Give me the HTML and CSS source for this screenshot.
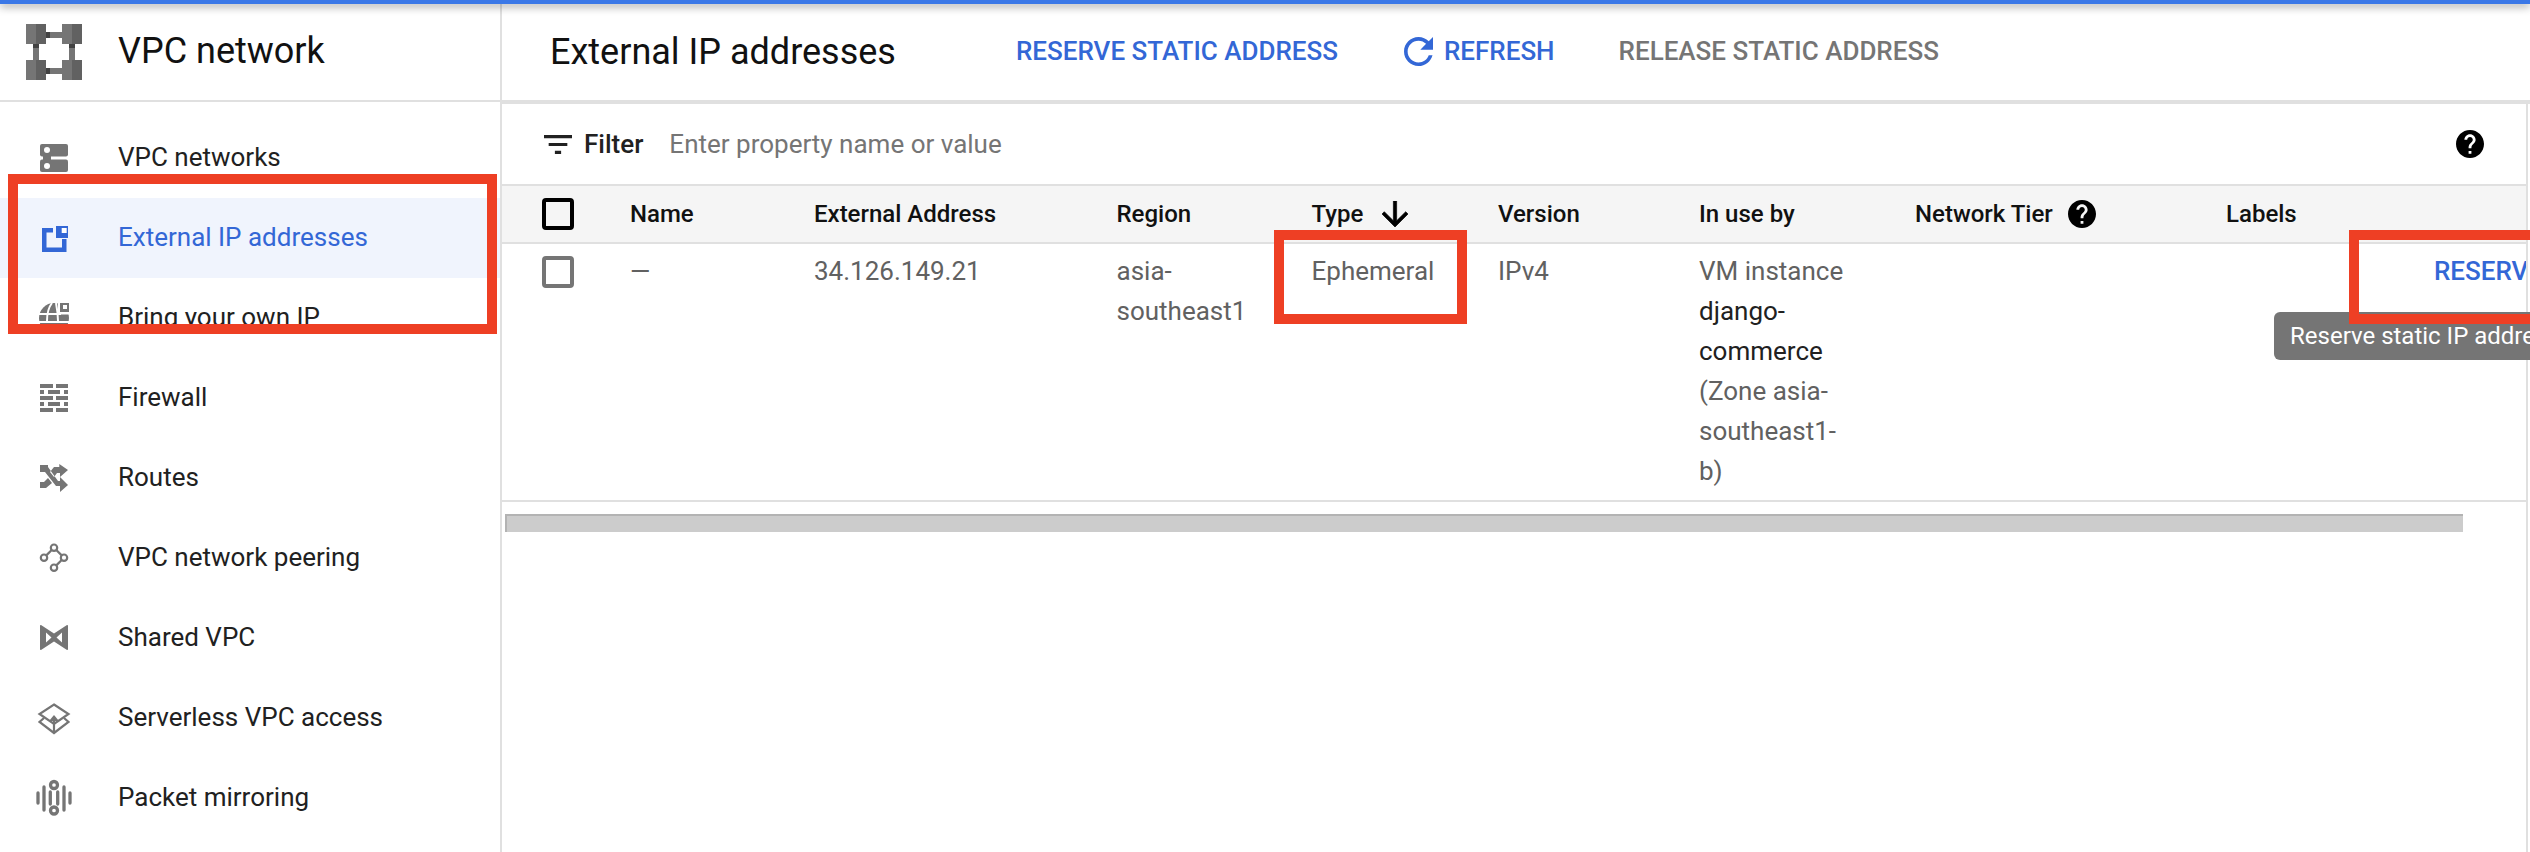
FILE: index.html
```html
<!DOCTYPE html>
<html lang="en">
<head>
<meta charset="utf-8">
<title>External IP addresses</title>
<link rel="stylesheet" href="styles.css">
</head>
<body>
<div class="app">
  <div class="topbar"></div>
  <div class="shell">
    <aside class="sidebar">
      <div class="side-head">
        <svg class="logo" width="56" height="56" viewBox="0 0 56 56">
          <rect x="20" y="8" width="16" height="6" fill="#757575"/>
          <rect x="20" y="8" width="4" height="6" fill="#424242"/>
          <rect x="20" y="44" width="16" height="6" fill="#757575"/>
          <rect x="20" y="44" width="4" height="6" fill="#424242"/>
          <rect x="7" y="20" width="6" height="16" fill="#757575"/>
          <rect x="7" y="20" width="6" height="4" fill="#424242"/>
          <rect x="43" y="20" width="6" height="16" fill="#757575"/>
          <rect x="43" y="20" width="6" height="4" fill="#424242"/>
          <g fill="#757575">
            <rect width="10" height="20"/><rect x="36" width="10" height="20"/>
            <rect y="36" width="10" height="20"/><rect x="36" y="36" width="10" height="20"/>
          </g>
          <g fill="#616161">
            <rect x="10" width="10" height="20"/><rect x="46" width="10" height="20"/>
            <rect x="10" y="36" width="10" height="20"/><rect x="46" y="36" width="10" height="20"/>
          </g>
        </svg>
        <h1 class="side-title">VPC network</h1>
      </div>
      <nav class="nav">
        <a class="nav-item">
          <svg class="nav-icon" viewBox="0 0 36 36"><rect x="4" y="4" width="28" height="12.5" rx="2"/><rect x="4" y="19.5" width="28" height="12.5" rx="2"/><rect x="7" y="14" width="8" height="8"/><circle class="cut" cx="11" cy="10" r="3"/><circle class="cut" cx="11" cy="26" r="3"/></svg>
          <span>VPC networks</span>
        </a>
        <a class="nav-item active">
          <svg class="nav-icon" viewBox="0 0 36 36"><path d="M6 8H17V12.5H10.5V27.5H26V19H30.5V32H6Z"/><rect x="20" y="6" width="12" height="12"/><rect class="cut" x="25.7" y="8" width="5" height="5"/></svg>
          <span>External IP addresses</span>
        </a>
        <a class="nav-item">
          <svg class="nav-icon" viewBox="0 0 36 36"><circle cx="18" cy="18" r="15"/><rect class="cut" x="22" y="0" width="14" height="14.5"/><rect x="24" y="3" width="9" height="9"/><rect class="cut" x="27" y="5" width="4" height="4"/><rect class="cut" x="3" y="13" width="22" height="2"/><rect class="cut" x="3" y="21" width="30" height="2"/><path class="line-cut" d="M16 3C12 8 11 13 11 21M20 3C21 8 22 13 22 21"/></svg>
          <span>Bring your own IP</span>
        </a>
        <a class="nav-item">
          <svg class="nav-icon" viewBox="0 0 36 36"><path d="M4 4h13v4H4zM20 4h12v4H20zM4 10h4v4H4zM12 10h12v4H12zM28 10h4v4h-4zM4 16h13v4H4zM20 16h12v4H20zM4 22h4v4H4zM12 22h12v4H12zM28 22h4v4h-4zM4 28h13v4H4zM20 28h12v4H20z"/></svg>
          <span>Firewall</span>
        </a>
        <a class="nav-item">
          <svg class="nav-icon" viewBox="0 0 36 36"><path d="M4 5V12H9L20 26H24V32L32 25 24 17V21H22L12 7V5ZM18 7H23.300V4L32 10 24 17V13H21L18 17 14 12ZM4 22H8L12 18 16 23 10 28H4Z"/></svg>
          <span>Routes</span>
        </a>
        <a class="nav-item">
          <svg class="nav-icon stroke" viewBox="0 0 36 36"><circle cx="18" cy="7.700" r="3.200"/><circle cx="8" cy="17.700" r="3.200"/><circle cx="28" cy="17.700" r="3.200"/><circle cx="18" cy="27.700" r="3.200"/><path d="M15.700 10 10.300 15.400M20.300 10 25.700 15.400M25.700 20 20.300 25.400"/></svg>
          <span>VPC network peering</span>
        </a>
        <a class="nav-item">
          <svg class="nav-icon" viewBox="0 0 36 36"><path fill-rule="evenodd" d="M5 5 18 13.500 31 5C31.600 5 32 5.400 32 6V29C32 29.600 31.600 30 31 30L18 21.500 5 30C4.400 30 4 29.600 4 29V6C4 5.400 4.400 5 5 5ZM10 12.500V22.500L15.500 17.500ZM26 12.500 20.500 17.500 26 22.500Z"/></svg>
          <span>Shared VPC</span>
        </a>
        <a class="nav-item">
          <svg class="nav-icon stroke" viewBox="0 0 36 36"><path d="M18 4.500 32.500 14 18 24 3.500 14Z"/><path d="M8 18 3.500 22 18 33 32.500 22 28 18"/><path d="M18 32V20"/><path class="solid" d="M18 15 23 21H13Z"/></svg>
          <span>Serverless VPC access</span>
        </a>
        <a class="nav-item">
          <svg class="nav-icon pills" viewBox="0 0 36 36"><circle cx="18" cy="5" r="3.500"/><circle cx="18" cy="30.500" r="3.500"/><path d="M2 13V23M8 7V30M14.300 12V24M21.700 12V24M28 7V30M34 13V23"/></svg>
          <span>Packet mirroring</span>
        </a>
      </nav>
    </aside>
    <main class="main">
      <header class="main-head">
        <h2 class="main-title">External IP addresses</h2>
        <a class="action reserve">RESERVE STATIC ADDRESS</a>
        <a class="action refresh">
          <svg width="29" height="29" viewBox="4 4 16 16"><path d="M17.650 6.350C16.200 4.900 14.210 4 12 4c-4.420 0-7.990 3.580-7.990 8s3.570 8 7.990 8c3.730 0 6.840-2.550 7.730-6h-2.080c-.82 2.330-3.040 4-5.650 4-3.310 0-6-2.690-6-6s2.690-6 6-6c1.660 0 3.140.69 4.220 1.780L13 11h7V4l-2.350 2.350z"/></svg>
          REFRESH
        </a>
        <a class="action release">RELEASE STATIC ADDRESS</a>
      </header>
      <div class="content">
        <div class="filter">
          <svg class="filter-icon" width="28" height="19" viewBox="3 6 18 12" preserveAspectRatio="none"><path d="M10 18h4v-2h-4v2zM3 6v2h18V6H3zm3 7h12v-2H6v2z"/></svg>
          <span class="filter-label">Filter</span>
          <span class="filter-hint">Enter property name or value</span>
          <svg class="help filter-help" width="28" height="28" viewBox="2 2 20 20"><path d="M12 2C6.480 2 2 6.480 2 12s4.480 10 10 10 10-4.480 10-10S17.520 2 12 2zm1 17h-2v-2h2v2zm2.070-7.750l-.9.92C13.450 12.900 13 13.500 13 15h-2v-.5c0-1.100.45-2.100 1.170-2.830l1.240-1.260c.37-.36.59-.86.59-1.410 0-1.100-.9-2-2-2s-2 .9-2 2H8c0-2.210 1.790-4 4-4s4 1.790 4 4c0 .88-.36 1.680-.93 2.250z"/></svg>
        </div>
        <div class="table-row table-head">
          <div><span class="check check-head"></span></div>
          <div>Name</div>
          <div>External Address</div>
          <div>Region</div>
          <div class="with-icon">Type
            <svg class="sort" width="26" height="26" viewBox="4 4 16 16"><path d="M20 12l-1.410-1.410L13 16.170V4h-2v12.170l-5.580-5.590L4 12l8 8 8-8z"/></svg>
          </div>
          <div>Version</div>
          <div>In use by</div>
          <div class="with-icon">Network Tier
            <svg class="help" width="28" height="28" viewBox="2 2 20 20"><path d="M12 2C6.480 2 2 6.480 2 12s4.480 10 10 10 10-4.480 10-10S17.520 2 12 2zm1 17h-2v-2h2v2zm2.070-7.750l-.9.92C13.450 12.900 13 13.500 13 15h-2v-.5c0-1.100.45-2.100 1.170-2.830l1.240-1.260c.37-.36.59-.86.59-1.410 0-1.100-.9-2-2-2s-2 .9-2 2H8c0-2.210 1.790-4 4-4s4 1.790 4 4c0 .88-.36 1.680-.93 2.250z"/></svg>
          </div>
          <div>Labels</div>
          <div></div>
        </div>
        <div class="table-row table-body">
          <div><span class="check"></span></div>
          <div>—</div>
          <div>34.126.149.21</div>
          <div class="cell-region">asia-southeast1</div>
          <div>Ephemeral</div>
          <div>IPv4</div>
          <div class="cell-use">VM instance <a class="vm-link">django-commerce</a> (Zone asia-southeast1-b)</div>
          <div></div>
          <div></div>
          <div class="cell-reserve">RESERVE</div>
        </div>
        <div class="scrollbar"></div>
      </div>
    </main>
  </div>
  <div class="tooltip">Reserve static IP address</div>
  <div class="mark mark-nav"></div>
  <div class="mark mark-type"></div>
  <div class="mark mark-reserve"></div>
</div>
</body>
</html>
```
FILE: styles.css
```css
* { box-sizing: border-box; }
html, body { margin: 0; padding: 0; background: #fff; }
body { font-family: Roboto, "Liberation Sans", sans-serif; font-size: 26px; color: #212121; overflow: hidden; }
h1, h2 { margin: 0; font-weight: 400; }

.app { position: relative; width: 2530px; height: 852px; overflow: hidden; display: flex; flex-direction: column; }
.topbar { position: relative; z-index: 2; height: 4px; flex: none; background: #3b78e7; box-shadow: 0 2px 8px rgba(0, 0, 0, .5); }
.shell { flex: 1; display: flex; min-height: 0; }

.sidebar { width: 502px; flex: none; border-right: 2px solid #e0e0e0; }
.side-head { height: 98px; display: flex; align-items: center; padding-left: 26px; gap: 36px; border-bottom: 2px solid #e0e0e0; }
.logo { flex: none; }
.side-title { font-size: 36px; line-height: 42px; color: #111; margin-top: -2px; }
.nav { padding-top: 16px; }
.nav-item { height: 80px; display: flex; align-items: center; gap: 46px; padding-left: 36px; color: #212121; }
.nav-item span { margin-top: -2px; }
.nav-item.active { background: #f0f4fd; color: #3367d6; }
.nav-icon { width: 36px; height: 36px; flex: none; fill: #757575; overflow: visible; }
.nav-item.active .nav-icon { fill: #3367d6; }
.nav-icon .cut { fill: #fff; }
.nav-icon .line-cut { fill: none; stroke: #fff; stroke-width: 2; }
.nav-icon.stroke { fill: none; stroke: #757575; stroke-width: 2.2; }
.nav-icon.stroke .solid { fill: #757575; stroke: none; }
.nav-icon.pills { fill: none; stroke: #757575; stroke-width: 3.3; stroke-linecap: round; }

.main { flex: 1; min-width: 0; display: flex; flex-direction: column; }
.main-head { height: 100px; flex: none; display: flex; align-items: center; padding: 0 0 2px 48px; border-bottom: 4px solid #e0e0e0; }
.main-title { font-size: 36px; line-height: 42px; color: #111; width: 466px; flex: none; margin-top: 2px; }
.action { font-weight: 500; white-space: nowrap; display: flex; align-items: center; }
.reserve { color: #3367d6; }
.refresh { color: #3367d6; margin-left: 66px; gap: 11px; }
.refresh svg { fill: #3367d6; }
.release { color: #757575; margin-left: 64px; }

.content { width: 2026px; flex: 1; min-height: 0; overflow: hidden; border-right: 2px solid #e0e0e0; }
.filter { height: 80px; display: flex; align-items: center; padding: 0 42px 0 42px; }
.filter-icon { fill: #212121; flex: none; }
.filter-label { font-weight: 500; margin-left: 12px; }
.filter-hint { color: #757575; margin-left: 26px; }
.filter-help { margin-left: auto; }
.help { fill: #000; flex: none; }

.table-row { display: grid; grid-template-columns: 88px 184px 302.5px 195px 186.5px 201px 216px 311px 208px 200px; padding-left: 40px; }
.table-head { height: 60px; background: #f5f5f5; border-top: 2px solid #e0e0e0; border-bottom: 2px solid #e0e0e0; align-items: center; font-size: 24px; font-weight: 500; color: #111; width: 2026px; }
.with-icon { display: flex; align-items: center; gap: 15px; }
.sort { fill: #000; stroke: #000; stroke-width: .4; margin-left: 4px; flex: none; }
.table-body { height: 258px; padding-top: 7px; border-bottom: 2px solid #e0e0e0; line-height: 40px; color: #616161; width: 2026px; }
.check { display: block; width: 32px; height: 32px; border: 4px solid #757575; border-radius: 4px; margin-top: 5px; }
.check-head { border-color: #000; margin-top: 0; }
.cell-region { padding-right: 30px; }
.cell-use { padding-right: 64px; }
.vm-link { color: #212121; }
.cell-reserve { color: #3367d6; font-weight: 500; white-space: nowrap; }
.scrollbar { width: 1958px; height: 18px; margin: 12px 0 0 2.500px; background: #ccc; border-top: 2px solid #b3b3b3; border-left: 2px solid #b3b3b3; }

.tooltip { position: absolute; left: 2274px; top: 312px; width: 400px; height: 48px; padding: 0 16px; border-radius: 6px; background: #757575; color: #fff; font-size: 24px; line-height: 48px; white-space: nowrap; }
.mark { position: absolute; border: 10px solid #ee3f24; pointer-events: none; }
.mark-nav { left: 8px; top: 174px; width: 489px; height: 160px; }
.mark-type { left: 1274px; top: 230px; width: 193px; height: 94px; }
.mark-reserve { left: 2349px; top: 230px; width: 300px; height: 94px; }
```
